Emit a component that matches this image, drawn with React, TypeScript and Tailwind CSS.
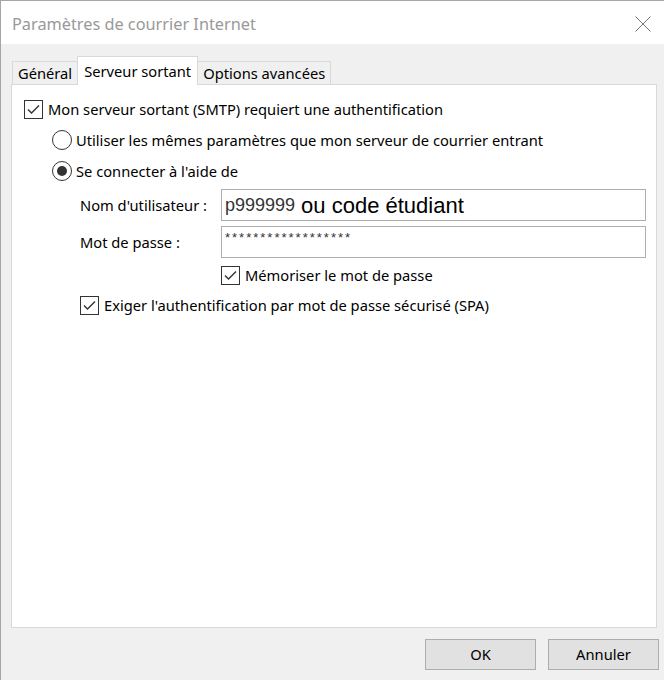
import React from 'react'

const Check = () => (
  <span className="w-[19px] h-[19px] border border-[#333] bg-white flex items-center justify-center shrink-0">
    <svg width="15" height="15" viewBox="0 0 15 15">
      <path d="M2 7.5 L5.5 11 L13 3.5" fill="none" stroke="#333" strokeWidth="1.4" />
    </svg>
  </span>
)

const Radio = ({ on }: { on?: boolean }) => (
  <span className="w-[20px] h-[20px] rounded-full border border-[#333] bg-white flex items-center justify-center shrink-0">
    {on && <span className="w-[10px] h-[10px] rounded-full bg-[#333]" />}
  </span>
)

const App = () => {
  return (
    <div className="w-[664px] h-[680px] bg-[#f0f0f0] border-l border-t border-[#a6a6a6] flex flex-col font-['Noto_Sans',sans-serif] text-[14.7px] text-black">
      <div className="h-[43px] bg-white flex items-center justify-between pl-[11px] pr-[13px]">
        <span className="text-[16.3px] text-[#999] mt-[3px]">Paramètres de courrier Internet</span>
        <svg width="16" height="16" viewBox="0 0 16 16" className="mt-[2px]">
          <path d="M0.5 0.5 L15.5 15.5 M15.5 0.5 L0.5 15.5" stroke="#777" strokeWidth="1" />
        </svg>
      </div>

      <div className="flex items-end pl-[11px] mt-[11px] h-[29px]">
        <div className="h-[23px] px-[5px] border border-b-0 border-r-0 border-[#d9d9d9] flex items-center">Général</div>
        <div className="h-[29px] px-[6px] bg-white border border-b-0 border-[#d9d9d9] flex items-center -mb-px relative z-10">Serveur sortant</div>
        <div className="h-[23px] px-[5px] border border-b-0 border-l-0 border-[#d9d9d9] flex items-center">Options avancées</div>
      </div>

      <div className="ml-[10px] w-[646px] h-[544px] bg-white border border-[#d9d9d9] flex flex-col pt-[15px] pl-[12px]">
        <label className="flex items-center gap-[5px] h-[19px]">
          <Check />
          <span>Mon serveur sortant (SMTP) requiert une authentification</span>
        </label>

        <div className="flex flex-col pl-[28px] mt-[11px] gap-[11px]">
          <label className="flex items-center gap-[4px] h-[20px]">
            <Radio />
            <span>Utiliser les mêmes paramètres que mon serveur de courrier entrant</span>
          </label>
          <label className="flex items-center gap-[4px] h-[20px]">
            <Radio on />
            <span>Se connecter à l'aide de</span>
          </label>
        </div>

        <div className="flex flex-col pl-[56px] mt-[8px]">
          <div className="flex items-center h-[32px]">
            <span className="w-[141px]">Nom d'utilisateur :</span>
            <div className="w-[425px] h-[32px] border border-[#adadad] flex items-center pl-[3px] font-['Liberation_Sans',Arial,sans-serif]">
              <span className="text-[18px] text-[#333]">p999999</span>
              <span className="text-[22px] text-black ml-[6px]">ou code étudiant</span>
            </div>
          </div>
          <div className="flex items-center h-[32px] mt-[5px]">
            <span className="w-[141px]">Mot de passe :</span>
            <div className="w-[425px] h-[32px] border border-[#adadad] pl-[3px] pt-[4px] font-['Liberation_Sans',Arial,sans-serif] text-[13px] leading-[14px] tracking-[2px] text-[#333]">
              ******************
            </div>
          </div>
          <label className="flex items-center gap-[5px] h-[19px] ml-[141px] mt-[8px]">
            <Check />
            <span>Mémoriser le mot de passe</span>
          </label>
        </div>

        <label className="flex items-center gap-[5px] h-[19px] ml-[56px] mt-[11px]">
          <Check />
          <span>Exiger l'authentification par mot de passe sécurisé (SPA)</span>
        </label>
      </div>

      <div className="flex justify-end gap-[12px] pr-[5px] mt-[11px]">
        <button className="w-[111px] h-[31px] bg-[#e1e1e1] border border-[#adadad]">OK</button>
        <button className="w-[111px] h-[31px] bg-[#e1e1e1] border border-[#adadad]">Annuler</button>
      </div>
    </div>
  )
}

export default App
